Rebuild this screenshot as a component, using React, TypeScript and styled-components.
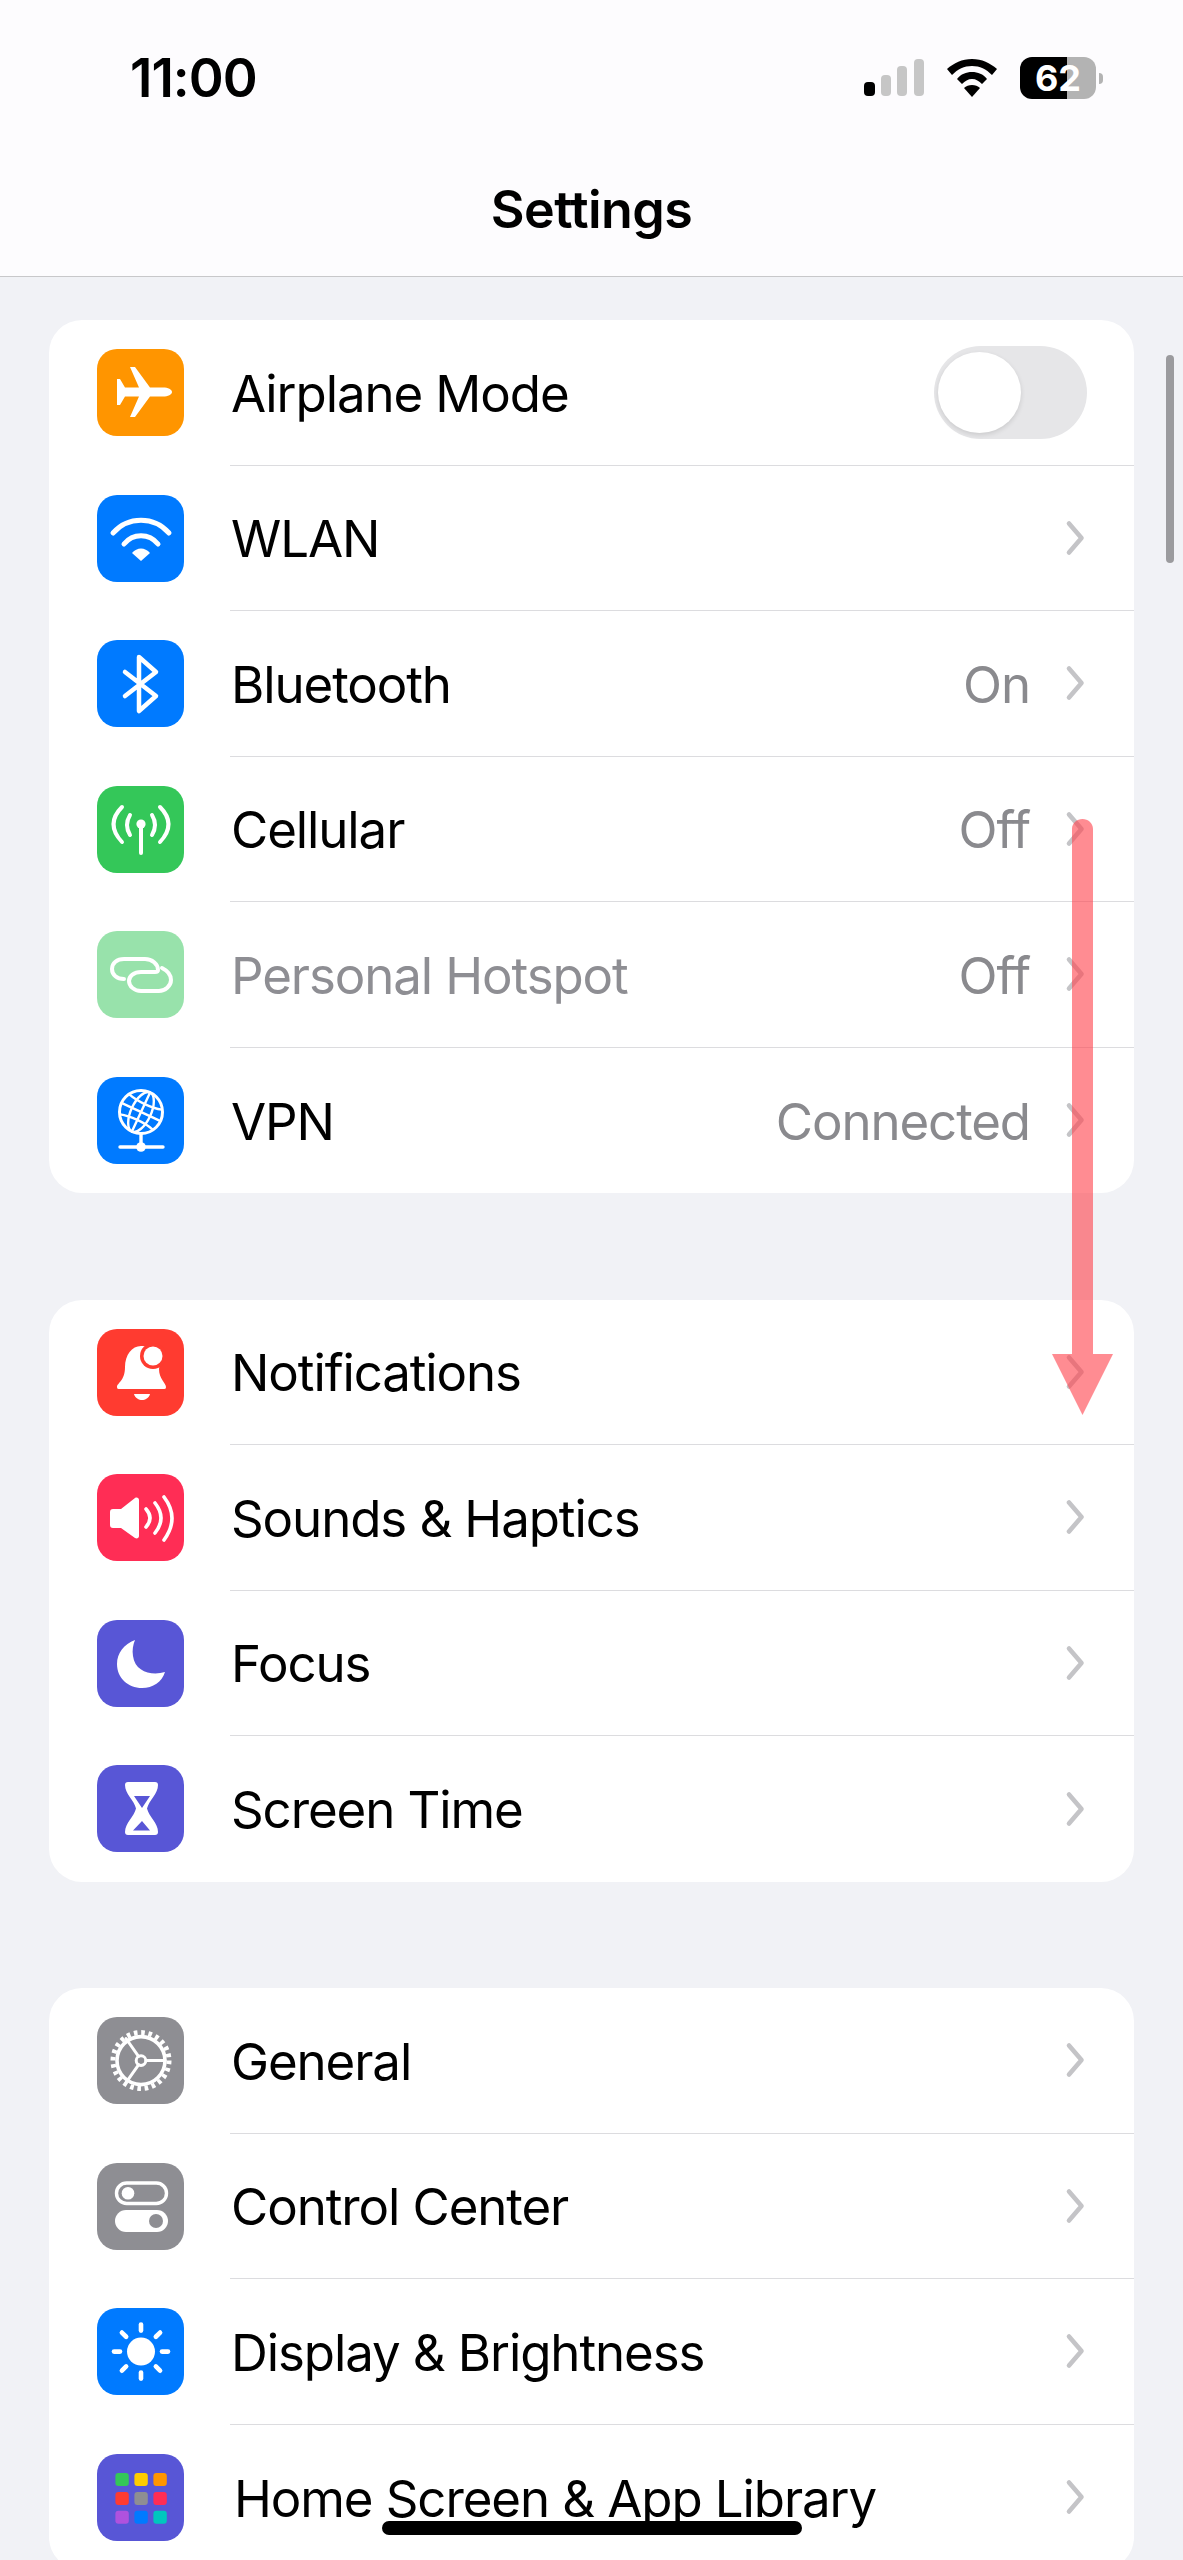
import React from 'react';
import styled, { createGlobalStyle } from 'styled-components';

const INDIGO = '#5856d6';
const FONT = 'Inter, "Liberation Sans", sans-serif';

const stroke = {
  fill: 'none',
  stroke: '#fff',
  strokeLinecap: 'round' as const,
  strokeLinejoin: 'round' as const,
};

const Glyph: React.FC<{ children: React.ReactNode }> = ({ children }) => (
  <svg viewBox="0 0 87 87" width="87" height="87" aria-hidden="true">
    {children}
  </svg>
);

const AirplaneGlyph = () => (
  <Glyph>
    <path
      fill="#fff"
      d="M75 43C75 40.5 71 38.5 66 38.5H53L38 18H33L42 38.5H28L23 30H20V56H23L28 47.5H42L33 68H38L53 47.5H66C71 47.5 75 45.5 75 43Z"
    />
  </Glyph>
);

const WifiGlyph = () => (
  <Glyph>
    <path {...stroke} strokeWidth="5" d="M16 38C31 21 57 21 72 38" />
    <path {...stroke} strokeWidth="5" d="M27 49C36 38 52 38 61 49" />
    <path fill="#fff" d="M35 58C40 52 48 52 53 58L44 66Z" />
  </Glyph>
);

const BluetoothGlyph = () => (
  <Glyph>
    <path {...stroke} strokeWidth="4.5" d="M28 32L59 56L42 71V17L59 32L28 56" />
  </Glyph>
);

const CellularGlyph = () => (
  <Glyph>
    <path {...stroke} strokeWidth="4" d="M44 39V67" />
    <circle cx="44" cy="38" r="4.6" fill="#fff" />
    <path {...stroke} strokeWidth="4" d="M33 29Q27 39 33 49M55 29Q61 39 55 49" />
    <path {...stroke} strokeWidth="4" d="M25 21Q8 38 25 56M63 21Q80 38 63 56" />
  </Glyph>
);

const HotspotGlyph = () => (
  <Glyph>
    <path
      {...stroke}
      strokeWidth="4"
      d="M27 48C20 48 15 44 15 38C15 32 20 28 27 28H48C55 28 61 33 61 39C61 40 60 41 58 41H44C37 41 32 45 32 50C32 55 37 60 44 60H62C68 60 74 55 74 49C74 44 71 40 65 37"
    />
  </Glyph>
);

const VpnGlyph = () => (
  <Glyph>
    <circle {...stroke} cx="44" cy="35" r="21.5" strokeWidth="3" />
    <g transform="rotate(25 44 35)" {...stroke} strokeWidth="2.4">
      <ellipse cx="44" cy="35" rx="10" ry="21.5" />
      <path d="M44 13.5V56.5M23 35H65M26 24C36 27 52 27 62 24M26 46C36 43 52 43 62 46" />
    </g>
    <path {...stroke} strokeWidth="3.4" d="M44 57V70M23 70H66" />
    <circle cx="44" cy="70" r="4.8" fill="#fff" />
  </Glyph>
);

const BellGlyph = () => (
  <Glyph>
    <path
      fill="#fff"
      d="M20 58C20 54 28 52 28 38C28 26 35 17 44 17C55 17 66 25 62 40C62 50 69 54 69 58C69 60 68 60 66 60H23C21 60 20 60 20 58Z"
    />
    <path fill="#fff" d="M37 65H53C52 69 48 71 45 71C42 71 38 69 37 65Z" />
    <circle cx="56" cy="27" r="13" fill="#ff3b30" />
    <circle cx="56" cy="27" r="9.5" fill="#fff" />
  </Glyph>
);

const SoundGlyph = () => (
  <Glyph>
    <path
      fill="#fff"
      d="M16 35H24L38 24C40 23 42 24 42 26V62C42 64 40 65 38 64L24 54H16C14 54 13 53 13 51V38C13 36 14 35 16 35Z"
    />
    <path {...stroke} strokeWidth="3.6" d="M49 35Q57 44 49 53M58 29Q70 44 58 59M67 23Q83 44 67 66" />
  </Glyph>
);

const MoonGlyph = () => (
  <Glyph>
    <path
      fill="#fff"
      d="M38 20C27 24 20 33 20 44C20 58 31 68 45 68C56 68 65 62 68 52C55 56 38 52 36 36C35 30 36 25 38 20Z"
    />
  </Glyph>
);

const HourglassGlyph = () => (
  <Glyph>
    <path
      fill="#fff"
      d="M31 17H58C60 17 61 18 61 20C61 29 52 35 50 43.5C52 52 61 58 61 67C61 69 60 70 58 70H31C29 70 28 69 28 67C28 58 37 52 39 43.5C37 35 28 29 28 20C28 18 29 17 31 17Z"
    />
    <path fill={INDIGO} d="M37 31H53L45 43ZM45 56L53 65.5H36Z" />
  </Glyph>
);

const GearGlyph = () => (
  <Glyph>
    <circle {...stroke} cx="44" cy="43.6" r="24" strokeWidth="3.6" />
    <circle cx="44" cy="43.6" r="28" fill="none" stroke="#fff" strokeWidth="5" strokeDasharray="3.6 3.73" />
    <circle {...stroke} cx="44" cy="43.6" r="4.8" strokeWidth="3" />
    <path {...stroke} strokeWidth="3" d="M49 43.6H68M41.5 39.4L29 21.5M41.5 47.8L29 65.7" />
  </Glyph>
);

const SwitchesGlyph = () => (
  <Glyph>
    <rect x="19.5" y="20" width="50" height="20.5" rx="10.2" fill="none" stroke="#fff" strokeWidth="3.4" />
    <circle cx="31" cy="30.2" r="6.3" fill="#fff" />
    <rect x="18" y="47" width="53" height="22" rx="11" fill="#fff" />
    <circle cx="59" cy="58" r="7" fill="#8e8e93" />
  </Glyph>
);

const SunGlyph = () => (
  <Glyph>
    <circle cx="44" cy="43.6" r="14" fill="#fff" />
    {[0, 45, 90, 135, 180, 225, 270, 315].map((angle) => (
      <path
        key={angle}
        {...stroke}
        strokeWidth="4.6"
        d="M44 16.6V22.6"
        transform={`rotate(${angle} 44 43.6)`}
      />
    ))}
  </Glyph>
);

const gridColors = [
  '#34c759', '#ffcc00', '#ff9500',
  '#ff3b30', '#8e8e93', '#ff2d55',
  '#af52de', '#007aff', '#00c7be',
];

const GridGlyph = () => (
  <Glyph>
    {gridColors.map((color, i) => (
      <rect
        key={color}
        x={18.4 + (i % 3) * 19}
        y={19 + Math.floor(i / 3) * 18.9}
        width="13.4"
        height="13"
        rx="3"
        fill={color}
      />
    ))}
  </Glyph>
);

interface SettingsItem {
  label: string;
  color: string;
  glyph: React.ReactNode;
  value?: string;
  toggle?: boolean;
  disabled?: boolean;
  nudge?: boolean;
}

const groups: SettingsItem[][] = [
  [
    { label: 'Airplane Mode', color: '#ff9500', glyph: <AirplaneGlyph />, toggle: true },
    { label: 'WLAN', color: '#007aff', glyph: <WifiGlyph /> },
    { label: 'Bluetooth', color: '#007aff', glyph: <BluetoothGlyph />, value: 'On' },
    { label: 'Cellular', color: '#34c759', glyph: <CellularGlyph />, value: 'Off' },
    { label: 'Personal Hotspot', color: '#34c759', glyph: <HotspotGlyph />, value: 'Off', disabled: true },
    { label: 'VPN', color: '#007aff', glyph: <VpnGlyph />, value: 'Connected' },
  ],
  [
    { label: 'Notifications', color: '#ff3b30', glyph: <BellGlyph /> },
    { label: 'Sounds & Haptics', color: '#ff2d55', glyph: <SoundGlyph /> },
    { label: 'Focus', color: INDIGO, glyph: <MoonGlyph /> },
    { label: 'Screen Time', color: INDIGO, glyph: <HourglassGlyph /> },
  ],
  [
    { label: 'General', color: '#8e8e93', glyph: <GearGlyph /> },
    { label: 'Control Center', color: '#8e8e93', glyph: <SwitchesGlyph /> },
    { label: 'Display & Brightness', color: '#007aff', glyph: <SunGlyph /> },
    { label: 'Home Screen & App Library', color: INDIGO, glyph: <GridGlyph />, nudge: true },
  ],
];

const App: React.FC = () => (
  <Screen>
    <GlobalStyle />
    <Header>
      <StatusBar>
        <Clock>11:00</Clock>
        <StatusIcons>
          <svg width="60" height="38" viewBox="0 0 60 38" aria-hidden="true">
            <rect x="0" y="23" width="11" height="14" rx="4" fill="#000" />
            <rect x="17" y="16" width="10" height="21" rx="4" fill="#c6c6c6" />
            <rect x="33" y="7" width="10" height="30" rx="4" fill="#c6c6c6" />
            <rect x="50" y="0" width="10" height="37" rx="4" fill="#c6c6c6" />
          </svg>
          <svg width="50" height="38" viewBox="0 0 50 38" aria-hidden="true">
            <path d="M25 0C15 0 7 4 0 10L5 16C11 10 17 7 25 7C33 7 39 10 45 16L50 10C43 4 35 0 25 0Z" fill="#000" />
            <path d="M25 13C19 13 14 15 10 20L15 25C18 22 21 20 25 20C29 20 32 22 35 25L40 20C36 15 31 13 25 13Z" fill="#000" />
            <path d="M25 26C22 26 19 27 17 29L25 38L33 29C31 27 28 26 25 26Z" fill="#000" />
          </svg>
          <Battery>
            <BatteryBody>62</BatteryBody>
            <BatteryNub />
          </Battery>
        </StatusIcons>
      </StatusBar>
      <NavBar>
        <Title>Settings</Title>
      </NavBar>
    </Header>

    <Content>
      {groups.map((items) => (
        <Group key={items[0].label}>
          {items.map((item) => (
            <Row key={item.label}>
              <IconTile $color={item.color} $dim={item.disabled}>
                {item.glyph}
              </IconTile>
              <RowBody>
                <Label $dim={item.disabled} $nudge={item.nudge}>
                  {item.label}
                </Label>
                {item.value && <Value>{item.value}</Value>}
                {item.toggle ? (
                  <Toggle>
                    <Knob />
                  </Toggle>
                ) : (
                  <svg width="20" height="36" viewBox="0 0 20 36" aria-hidden="true">
                    <path
                      d="M4 3.500L16.500 18L4 32.500"
                      fill="none"
                      stroke="#c4c4c7"
                      strokeWidth="4.600"
                      strokeLinecap="round"
                      strokeLinejoin="round"
                    />
                  </svg>
                )}
              </RowBody>
            </Row>
          ))}
        </Group>
      ))}
    </Content>

    <ScrollThumb />
    <ScrollArrow width="61" height="596" viewBox="0 0 61 596" aria-hidden="true">
      <path
        d="M20 10C20 4 25 0 30.500 0C36 0 41 4 41 10V535H61L30.500 596L0 535H20Z"
        fill="#ff4650"
      />
    </ScrollArrow>
    <HomeIndicator />
  </Screen>
);

const GlobalStyle = createGlobalStyle`
  html, body {
    margin: 0;
    padding: 0;
    background: #f1f2f6;
  }
`;

const Screen = styled.div`
  position: relative;
  width: 1183px;
  height: 2560px;
  overflow: hidden;
  background: #f1f2f6;
  font-family: ${FONT};
  color: #000;
`;

const Header = styled.header`
  background: #fdfcfe;
  border-bottom: 1px solid #c8c8ca;
`;

const StatusBar = styled.div`
  height: 156px;
  padding: 0 80px 0 130px;
  display: flex;
  align-items: center;
  justify-content: space-between;
`;

const Clock = styled.div`
  font-size: 53px;
  font-weight: 600;
  letter-spacing: -1px;
`;

const StatusIcons = styled.div`
  display: flex;
  align-items: center;
  gap: 23px;
`;

const Battery = styled.div`
  display: flex;
  align-items: center;
  gap: 3px;
`;

const BatteryBody = styled.div`
  width: 76px;
  height: 42px;
  border-radius: 12px;
  background: linear-gradient(90deg, #000 62%, #b3b3b3 62%);
  color: #fff;
  font-size: 36px;
  font-weight: 700;
  line-height: 42px;
  text-align: center;
`;

const BatteryNub = styled.div`
  width: 4px;
  height: 11px;
  border-radius: 0 4px 4px 0;
  background: #b3b3b3;
`;

const NavBar = styled.div`
  height: 106px;
  padding-bottom: 14px;
  display: flex;
  align-items: center;
  justify-content: center;
`;

const Title = styled.h1`
  margin: 0;
  font-size: 52px;
  font-weight: 600;
  letter-spacing: -0.6px;
`;

const Content = styled.main`
  padding: 43px 49px 0;
  display: flex;
  flex-direction: column;
  gap: 106.5px;
`;

const Group = styled.section`
  background: #fff;
  border-radius: 33px;
  overflow: hidden;
`;

const Row = styled.div`
  height: 145.5px;
  padding-left: 48px;
  display: flex;
  align-items: center;
  gap: 46px;
`;

const IconTile = styled.div<{ $color: string; $dim?: boolean }>`
  flex: none;
  width: 87px;
  height: 87px;
  border-radius: 20px;
  background: ${({ $color }) => $color};
  opacity: ${({ $dim }) => ($dim ? 0.5 : 1)};
`;

const RowBody = styled.div`
  flex: 1;
  align-self: stretch;
  padding-right: 49px;
  display: flex;
  align-items: center;
  border-bottom: 1px solid #dcdcdf;

  ${Row}:last-child & {
    border-bottom: none;
  }
`;

const Label = styled.div<{ $dim?: boolean; $nudge?: boolean }>`
  flex: 1;
  margin-left: ${({ $nudge }) => ($nudge ? 4 : 1)}px;
  padding-top: 2px;
  font-size: 51px;
  letter-spacing: -1.1px;
  color: ${({ $dim }) => ($dim ? '#8e8e93' : '#000')};
`;

const Value = styled.div`
  margin-right: 35px;
  padding-top: 2px;
  font-size: 51px;
  letter-spacing: -1.1px;
  color: #8a8a8e;
`;

const Toggle = styled.div`
  box-sizing: border-box;
  width: 153px;
  height: 93px;
  margin-right: -2px;
  padding: 6px 4px;
  border-radius: 47px;
  background: #e6e6e8;
`;

const Knob = styled.div`
  width: 83px;
  height: 81px;
  border-radius: 50%;
  background: #fff;
  box-shadow: 0 2px 5px rgba(0, 0, 0, 0.12);
`;

const ScrollThumb = styled.div`
  position: absolute;
  left: 1166px;
  top: 355px;
  width: 8px;
  height: 208px;
  border-radius: 4px;
  background: #9b9b9e;
`;

const ScrollArrow = styled.svg`
  position: absolute;
  left: 1052px;
  top: 819px;
  opacity: 0.62;
`;

const HomeIndicator = styled.div`
  position: absolute;
  left: 382px;
  top: 2521px;
  width: 420px;
  height: 14px;
  border-radius: 7px;
  background: #000;
`;

export default App;
